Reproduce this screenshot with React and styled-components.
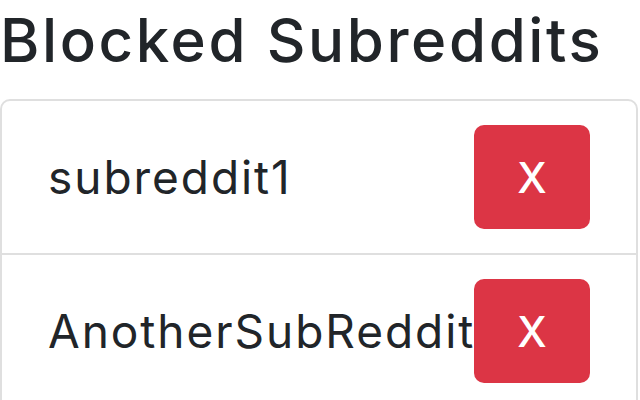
import React from 'react'
import styled, { createGlobalStyle } from 'styled-components'

const GlobalStyle = createGlobalStyle`
  html, body {
    margin: 0;
    padding: 0;
    background: #fff;
    overflow: hidden;
  }
  body {
    font-family: Inter, "Liberation Sans", sans-serif;
    color: #212529;
  }
`

const Page = styled.div`
  width: 640px;
  height: 400px;
  overflow: hidden;
  padding-top: 3px;
  box-sizing: border-box;
`

const Title = styled.h2`
  margin: 0 0 22px 0;
  font-size: 60px;
  font-weight: 500;
  line-height: 74px;
  letter-spacing: 2.6px;
  white-space: nowrap;
`

const List = styled.ul`
  list-style: none;
  margin: 0;
  padding: 0;
  width: 638px;
  border: 2px solid #dfdfdf;
  border-radius: 10px;
  box-sizing: border-box;
`

const Item = styled.li`
  display: flex;
  align-items: center;
  height: 152px;
  padding: 0 46px 0 46px;
  box-sizing: border-box;
  & + & {
    height: 154px;
    border-top: 2px solid #dfdfdf;
  }
`

const Name = styled.span`
  flex: 1 1 auto;
  min-width: 0;
  font-size: 46px;
  letter-spacing: 1.95px;
  white-space: nowrap;
`

const RemoveButton = styled.button`
  flex: none;
  position: relative;
  width: 116px;
  height: 104px;
  border: none;
  border-radius: 10px;
  background: #dc3545;
  color: #fff;
  font-family: Inter, "Liberation Sans", sans-serif;
  font-size: 42px;
  font-weight: 500;
  cursor: pointer;
`

const blocked = ['subreddit1', 'AnotherSubReddit']

export default function App() {
  return (
    <>
      <GlobalStyle />
      <Page>
        <Title>Blocked Subreddits</Title>
        <List>
          {blocked.map(name => (
            <Item key={name}>
              <Name>{name}</Name>
              <RemoveButton>X</RemoveButton>
            </Item>
          ))}
        </List>
      </Page>
    </>
  )
}
